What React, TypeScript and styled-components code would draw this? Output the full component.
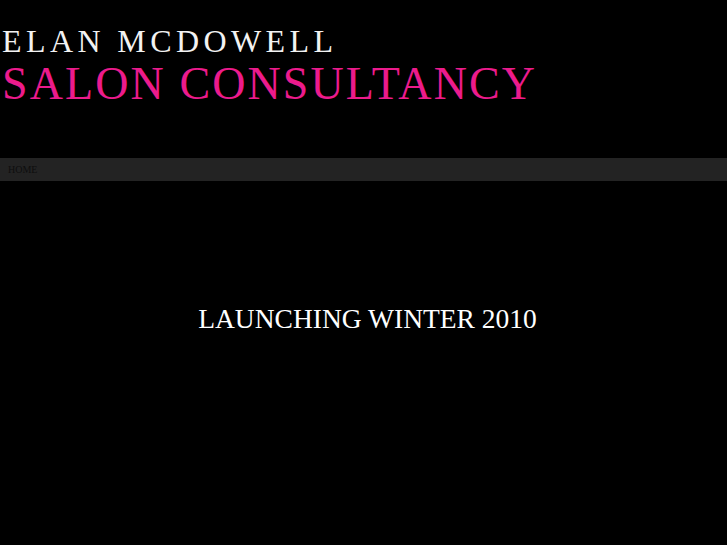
import React from 'react';
import styled, { createGlobalStyle } from 'styled-components';

const GlobalStyle = createGlobalStyle`
	html, body {
		margin: 0;
		padding: 0;
		background: #000;
	}
	body {
		font-family: "Liberation Serif", "Times New Roman", serif;
	}
`;

const Page = styled.div`
	min-height: 545px;
	background: #000;
	display: flex;
	flex-direction: column;
`;

const Masthead = styled.header`
	padding: 23px 0 0 2px;
	height: 158px;
	box-sizing: border-box;
`;

const Name = styled.h1`
	margin: 0;
	font-weight: normal;
	font-size: 32px;
	line-height: 36px;
	letter-spacing: 4.4px;
	color: #f2f2f2;
`;

const Tagline = styled.h2`
	margin: 0;
	font-weight: normal;
	font-size: 46px;
	line-height: 49px;
	letter-spacing: 2.1px;
	color: #ec1b8c;
`;

const NavBar = styled.nav`
	height: 23px;
	background: #232323;
	display: flex;
	align-items: center;
	padding-left: 8px;
`;

const NavLink = styled.a`
	font-size: 10px;
	color: #0e0e0e;
	text-decoration: none;
	text-transform: uppercase;
`;

const Main = styled.main`
	display: flex;
	justify-content: center;
	padding: 122px 0 0 8px;
`;

const Announcement = styled.p`
	margin: 0;
	font-size: 27.5px;
	color: #fff;
`;

export default function App() {
	return (
		<Page>
			<GlobalStyle />
			<Masthead>
				<Name>ELAN MCDOWELL</Name>
				<Tagline>SALON CONSULTANCY</Tagline>
			</Masthead>
			<NavBar>
				<NavLink href="#">Home</NavLink>
			</NavBar>
			<Main>
				<Announcement>LAUNCHING WINTER 2010</Announcement>
			</Main>
		</Page>
	);
}
